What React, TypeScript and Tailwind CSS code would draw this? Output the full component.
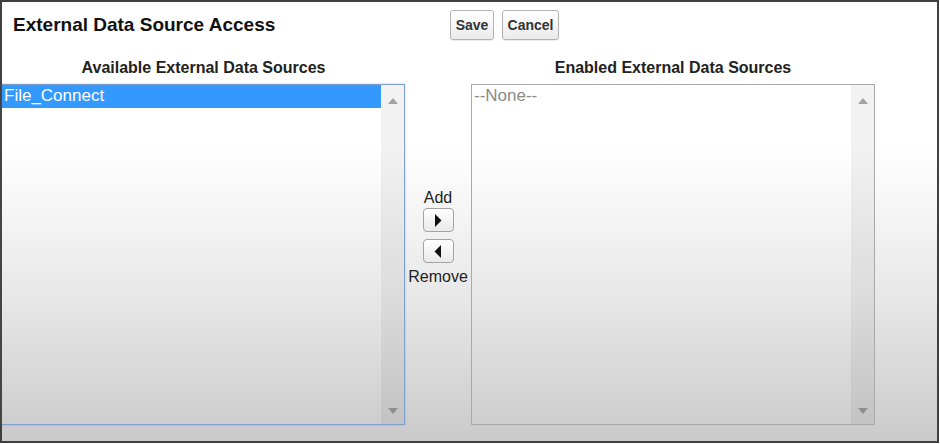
import React from 'react';

const ScrollTrack = () => (
  <div className="flex w-[23px] shrink-0 flex-col items-center justify-between bg-black/[0.05] pt-[13px] pb-[10px]">
    <svg width="10" height="6" viewBox="0 0 10 6">
      <path d="M0 6 L5 0 L10 6 Z" fill="#a3a3a3" />
    </svg>
    <svg width="10" height="6" viewBox="0 0 10 6">
      <path d="M0 0 L10 0 L5 6 Z" fill="#8f8f8f" />
    </svg>
  </div>
);

const MoveButton = ({ dir }: { dir: 'right' | 'left' }) => (
  <button className="flex h-[24px] w-[31px] items-center justify-center rounded-[4px] border border-[#a3a3a3] bg-[linear-gradient(to_bottom,#ffffff,#e9e9e9)]">
    <svg width="8" height="13" viewBox="0 0 8 13">
      {dir === 'right' ? (
        <path d="M1 0 L7.5 6.5 L1 13 Z" fill="#111" />
      ) : (
        <path d="M7 0 L0.5 6.5 L7 13 Z" fill="#111" />
      )}
    </svg>
  </button>
);

export default function App() {
  return (
    <div className="h-[443px] w-[939px] border-2 border-[#404040] bg-[linear-gradient(to_bottom,#ffffff_0%,#ffffff_33%,#e7e7e7_68%,#cacaca_100%)] font-['Liberation_Sans',Arial,sans-serif] text-[#222]">
      {/* header */}
      <div className="flex items-start pt-[8px]">
        <h1 className="mt-[4px] w-[448px] pl-[11px] text-[19px] font-bold leading-[22px] text-[#111]">
          External Data Source Access
        </h1>
        <div className="flex gap-[8px]">
          <button className="h-[30px] w-[44px] rounded-[3px] border border-[#b3b3b3] bg-[linear-gradient(to_bottom,#ffffff,#ebebeb)] text-[14px] font-bold text-[#333] shadow-[0_1px_1px_rgba(0,0,0,0.08)]">
            Save
          </button>
          <button className="h-[30px] w-[57px] rounded-[3px] border border-[#b3b3b3] bg-[linear-gradient(to_bottom,#ffffff,#ebebeb)] text-[14px] font-bold text-[#333] shadow-[0_1px_1px_rgba(0,0,0,0.08)]">
            Cancel
          </button>
        </div>
      </div>

      {/* column headings */}
      <div className="mt-[18px] grid h-[20px] grid-cols-[403px_66px_404px] text-[16px] font-bold leading-[20px] text-[#222]">
        <div className="text-center">Available External Data Sources</div>
        <div />
        <div className="text-center">Enabled External Data Sources</div>
      </div>

      {/* lists */}
      <div className="mt-[6px] grid grid-cols-[403px_66px_404px]">
        <div className="flex h-[341px] border border-l-0 border-[#7f9fd0] shadow-[0_0_2px_rgba(90,130,200,0.45)]">
          <div className="flex-1">
            <div className="h-[23px] bg-[#3399ff] pl-[2px] text-[17px] leading-[22px] text-white">
              File_Connect
            </div>
          </div>
          <ScrollTrack />
        </div>

        <div className="flex flex-col items-center pt-[104px] text-[16px] leading-[20px] text-[#222]">
          <span>Add</span>
          <MoveButton dir="right" />
          <div className="mt-[7px]">
            <MoveButton dir="left" />
          </div>
          <span className="mt-[4px]">Remove</span>
        </div>

        <div className="flex h-[341px] border border-[#a9a9a9]">
          <div className="flex-1 pl-[2px] text-[17px] leading-[22px] text-[#8a8a8a]">--None--</div>
          <ScrollTrack />
        </div>
      </div>
    </div>
  );
}
